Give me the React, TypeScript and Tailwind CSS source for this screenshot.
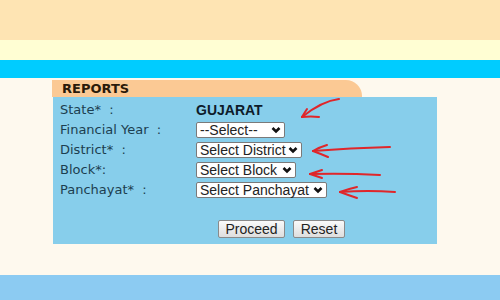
import React from 'react';

const rows = [
  { label: 'State*', kind: 'text', value: 'GUJARAT' },
  { label: 'Financial Year', kind: 'select', value: '--Select--', w: 'w-[89px]' },
  { label: 'District*', kind: 'select', value: 'Select District', w: 'w-[106px]' },
  { label: 'Block*', kind: 'select', value: 'Select Block', w: 'w-[100px]', tight: true },
  { label: 'Panchayat*', kind: 'select', value: 'Select Panchayat', w: 'w-[131px]' },
];

const Chevron = () => (
  <svg width="10" height="8" viewBox="0 0 10 8" className="shrink-0">
    <path d="M1.5 2 L5 5.5 L8.5 2" fill="none" stroke="#111" strokeWidth="2.6" />
  </svg>
);

const FakeSelect: React.FC<{ value: string; w: string }> = ({ value, w }) => (
  <div
    className={`${w} h-[16px] flex items-center justify-between bg-white border border-[#7a7a7a] rounded-[2px] pl-[3px] pr-[3px] text-[14px] leading-none text-[#222] font-['Liberation_Sans',Arial,sans-serif]`}
  >
    <span className="whitespace-nowrap">{value}</span>
    <Chevron />
  </div>
);

const Arrows = () => (
  <svg
    className="absolute inset-0 pointer-events-none"
    width="500"
    height="300"
    viewBox="0 0 500 300"
  >
    <g fill="none" stroke="#e0262a" strokeWidth="2" strokeLinecap="round">
      <path d="M339 99 Q322 101 302 117" />
      <path d="M302 117 Q311 116 319 117" />
      <path d="M302 117 Q305 112 307 109" />

      <path d="M390 147 Q350 148 313 151" />
      <path d="M313 151 Q320 147 327 145" />
      <path d="M313 151 Q321 154 328 157" />

      <path d="M380 175 Q345 173 310 174" />
      <path d="M310 174 Q316 172 322 170" />
      <path d="M310 174 Q316 176 322 178" />

      <path d="M395 192 Q368 190 340 192" />
      <path d="M340 192 Q348 189 357 187" />
      <path d="M340 192 Q348 195 357 198" />
    </g>
  </svg>
);

export default function App() {
  return (
    <div className="relative w-[500px] h-[300px] overflow-hidden bg-[#fef9ee]">
      <div className="h-[40px] bg-[#fee4b3]" />
      <div className="h-[20px] bg-[#fffed3]" />
      <div className="h-[18px] bg-[#00ccff]" />
      <div className="h-[197px] pt-[2px] pl-[52px]">
        <div className="w-[310px] h-[17px] bg-[#fbc994] rounded-tr-[16px] pl-[10px] flex items-center">
          <span className="text-[13px] font-bold text-[#2a1a0a] font-['DejaVu_Sans',Verdana,sans-serif] leading-none">
            REPORTS
          </span>
        </div>
        <div className="ml-[1px] w-[384px] h-[147px] bg-[#87ceeb] pt-[3px] pl-[7px]">
          {rows.map((r) => (
            <div key={r.label} className="h-[20px] flex items-center">
              <div className="w-[136px] text-[13px] text-[#1c3e50] font-['DejaVu_Sans',Verdana,sans-serif] whitespace-nowrap">
                {r.label}
                {r.tight ? ':' : '\u00a0 :'}
              </div>
              {r.kind === 'text' ? (
                <span className="text-[14px] font-bold text-[#0d1b2a] font-['Liberation_Sans',Arial,sans-serif]">
                  {r.value}
                </span>
              ) : (
                <FakeSelect value={r.value} w={r.w as string} />
              )}
            </div>
          ))}
          <div className="mt-[20px] ml-[158px] flex gap-[8px]">
            <button className="w-[67px] h-[18px] flex items-center justify-center bg-gradient-to-b from-[#fafafa] to-[#dedede] border border-[#8a8a8a] rounded-[2px] text-[14px] text-[#222] font-['Liberation_Sans',Arial,sans-serif] leading-none">
              Proceed
            </button>
            <button className="w-[52px] h-[18px] flex items-center justify-center bg-gradient-to-b from-[#fafafa] to-[#dedede] border border-[#8a8a8a] rounded-[2px] text-[14px] text-[#222] font-['Liberation_Sans',Arial,sans-serif] leading-none">
              Reset
            </button>
          </div>
        </div>
      </div>
      <div className="h-[25px] bg-[#8ccbf2]" />
      <Arrows />
    </div>
  );
}
